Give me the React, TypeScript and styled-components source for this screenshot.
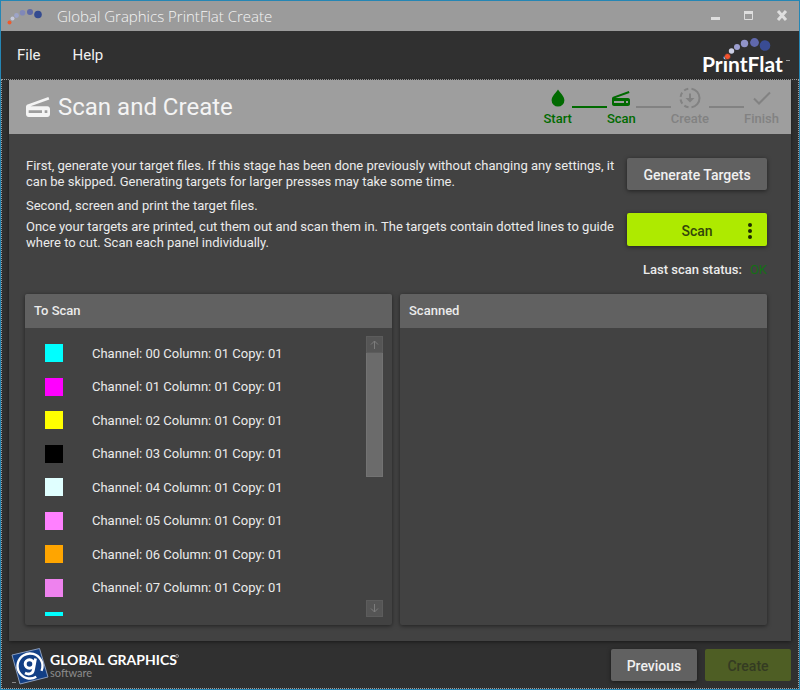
import React, { useRef } from 'react';
import styled, { createGlobalStyle, css } from 'styled-components';

const GlobalStyle = createGlobalStyle`
  * { box-sizing: border-box; }
  body { margin: 0; background: #303030; font-family: Roboto, sans-serif; }
  button { font-family: inherit; border: 0; padding: 0; cursor: pointer; }
  p, h1, h2, ul, ol { margin: 0; padding: 0; }
  ul, ol { list-style: none; }
`;

const Window = styled.div`
  min-height: 100vh;
  display: flex;
  flex-direction: column;
  border: 1px solid #2586b4;
  background: #303030;
  color: #ebebeb;
`;

const TitleBar = styled.header`
  height: 30px;
  display: flex;
  align-items: center;
  background: #9b9b9b;
  padding: 0 9px 0 6px;
`;

const TitleText = styled.span`
  flex: 1;
  margin-left: 12px;
  font: 300 15px/20px 'Open Sans', sans-serif;
  color: #f4f4f4;
`;

const WindowButtons = styled.div`
  display: flex;
  gap: 17px;
`;

const WindowButton = styled.button`
  width: 16px;
  height: 16px;
  background: none;
  color: #dedede;
  svg { display: block; }
`;

const MenuBar = styled.nav`
  height: 48px;
  display: flex;
  align-items: center;
  justify-content: space-between;
  padding: 0 8px 0 16px;
`;

const MenuItems = styled.div`
  display: flex;
  gap: 32px;
`;

const MenuItem = styled.button`
  background: none;
  color: #f0f0f0;
  font-size: 15px;
  line-height: 20px;
`;

const Workspace = styled.main`
  flex: 1;
  display: flex;
  flex-direction: column;
  border: 1px dotted #a0a0a0;
  padding: 0 7px;
`;

const Card = styled.section`
  flex: 1;
  display: flex;
  flex-direction: column;
  background: #424242;
  box-shadow: 0 1px 4px rgba(0, 0, 0, 0.5);
`;

const CardHeader = styled.div`
  height: 54px;
  display: flex;
  align-items: center;
  justify-content: space-between;
  padding: 0 12px 0 17px;
  background: #9e9e9e;
`;

const Heading = styled.div`
  display: flex;
  align-items: center;
  gap: 8px;
  color: #f4f4f4;
`;

const HeadingText = styled.h1`
  font-size: 24px;
  line-height: 28px;
  font-weight: 400;
`;

const Steps = styled.ol`
  display: flex;
  align-items: flex-start;
`;

const Step = styled.li<{ $done?: boolean }>`
  display: grid;
  grid-template-rows: 22px 16px;
  row-gap: 2px;
  place-items: center;
  color: ${p => (p.$done ? '#006a00' : '#828282')};
  font-size: 13px;
  line-height: 16px;
  font-weight: 500;
  svg { display: block; }
`;

const StepLine = styled.li<{ $done?: boolean }>`
  width: 35px;
  height: 2px;
  margin-top: 19px;
  background: ${p => (p.$done ? '#006a00' : '#828282')};
`;

const CardBody = styled.div`
  flex: 1;
  display: flex;
  flex-direction: column;
  gap: 16px;
  padding: 24px 24px 16px 16px;
`;

const Intro = styled.div`
  display: flex;
  justify-content: space-between;
  gap: 10px;
  padding-left: 1px;
`;

const Instructions = styled.div`
  flex: 1;
  font-size: 13px;
  line-height: 16px;
`;

const Paragraph = styled.p`
  & + & { margin-top: 8px; }
  & + & + & { margin-top: 5px; }
`;

const Actions = styled.div`
  width: 140px;
  display: flex;
  flex-direction: column;
  gap: 23px;
`;

const Button = styled.button<{ $tone?: 'accent' | 'muted' }>`
  height: 32px;
  min-width: 86px;
  padding-top: 2px;
  border-radius: 2px;
  font-size: 14px;
  font-weight: 500;
  background: #616161;
  color: #f0f0f0;
  box-shadow: 0 1px 4px rgba(0, 0, 0, 0.5);
  ${p => p.$tone === 'accent' && css`
    height: 33px;
    display: grid;
    grid-template-columns: 1fr auto 1fr;
    align-items: center;
    padding-right: 12px;
    padding-left: 12px;
    background: #aeea00;
    color: #34460a;
    svg { justify-self: end; grid-column: 3; }
    span { grid-column: 2; }
  `}
  ${p => p.$tone === 'muted' && css`
    background: #4e5e24;
    color: #343b22;
    box-shadow: none;
  `}
`;

const Status = styled.p`
  display: flex;
  justify-content: flex-end;
  gap: 8px;
  margin-top: -7px;
  font-size: 13px;
  line-height: 16px;
  font-weight: 500;
  white-space: nowrap;
`;

const StatusValue = styled.span`
  color: #147014;
  font-weight: 400;
`;

const Panels = styled.div`
  flex: 1;
  display: grid;
  grid-template-columns: 1fr 1fr;
  gap: 8px;
`;

const Panel = styled.section`
  display: flex;
  flex-direction: column;
  border-radius: 2px;
  background: #424242;
  box-shadow: 0 1px 4px rgba(0, 0, 0, 0.5);
  overflow: hidden;
`;

const PanelTitle = styled.h2`
  padding: 0 9px;
  background: #616161;
  font-size: 13px;
  line-height: 34px;
  font-weight: 500;
`;

const Scroller = styled.div`
  flex: 1;
  display: flex;
  margin: 8px 9px 8px 20px;
`;

const ChannelList = styled.ul`
  flex: 1;
  height: 280px;
  overflow: hidden;
`;

const Channel = styled.li`
  height: 34px;
  display: flex;
  align-items: center;
  gap: 29px;
  font-size: 13px;
  &:nth-child(even) { height: 33px; }
`;

const Swatch = styled.span<{ $color: string }>`
  width: 18px;
  height: 18px;
  background: ${p => p.$color};
`;

const ScrollBar = styled.div`
  width: 17px;
  display: flex;
  flex-direction: column;
`;

const ScrollButton = styled.button`
  height: 17px;
  background: #555;
  border: 1px solid #5c5c5c;
  color: #7c7c7c;
  display: grid;
  place-items: center;
`;

const ScrollTrack = styled.div`
  flex: 1;
`;

const ScrollThumb = styled.div`
  height: 50%;
  background: #6b6b6b;
  border: 1px solid #737373;
  border-top: 0;
`;

const Footer = styled.footer`
  height: 47px;
  display: flex;
  align-items: center;
  justify-content: space-between;
`;

const FooterButtons = styled.div`
  display: flex;
  gap: 8px;
`;

const ScannerIcon = ({ size }: { size: number }) => (
  <svg width={size} height={Math.round((size * 15) / 18)} viewBox="3 5 18 15" fill="currentColor" aria-hidden="true">
    <g transform="translate(24 0) scale(-1 1)">
      <path d="M19.8 10.7 4.200 5l-.7 1.900L17.600 12H5c-1.100 0-2 .9-2 2v4c0 1.100.9 2 2 2h14c1.100 0 2-.9 2-2v-5.500c0-.8-.5-1.600-1.200-1.800zM7 17H5v-2h2v2zm12 0H9v-2h10v2z" />
    </g>
  </svg>
);

const DropIcon = () => (
  <svg width="20" height="20" viewBox="0 0 20 20" fill="currentColor" aria-hidden="true">
    <path d="M10 1.500C8 4.700 3.600 8.300 3.600 12.200a6.400 6.400 0 0 0 12.800 0C16.400 8.300 12 4.700 10 1.500Z" />
  </svg>
);

const ProgressIcon = () => (
  <svg width="22" height="22" viewBox="0 0 22 22" fill="none" stroke="currentColor" strokeWidth="2" aria-hidden="true">
    <path d="M12.500 1.700a9.400 9.400 0 0 1 0 18.600" />
    <path d="M9.500 20.300A9.400 9.400 0 0 1 9.500 1.700" strokeDasharray="4.500 2.800" />
    <path d="M11 6.500V12" />
    <path d="m6.500 11 4.500 4.500 4.500-4.500Z" fill="currentColor" stroke="none" />
  </svg>
);

const CheckIcon = () => (
  <svg width="20" height="20" viewBox="0 0 20 20" fill="none" stroke="currentColor" strokeWidth="2" aria-hidden="true">
    <path d="m2 10.500 5 5L18 4.500" />
  </svg>
);

const MoreIcon = () => (
  <svg width="10" height="18" viewBox="0 0 10 18" fill="#1d2a00" aria-hidden="true">
    <circle cx="5" cy="3" r="2" />
    <circle cx="5" cy="9" r="2" />
    <circle cx="5" cy="15" r="2" />
  </svg>
);

const ArrowIcon = ({ down }: { down?: boolean }) => (
  <svg width="9" height="9" viewBox="0 0 9 9" fill="none" stroke="currentColor" aria-hidden="true">
    <path d={down ? 'M4.500 0V8M1 4.500 4.500 8 8 4.500' : 'M4.500 9V1M1 4.500 4.500 1 8 4.500'} />
  </svg>
);

const AppIcon = () => (
  <svg width="38" height="18" viewBox="0 0 38 18" aria-hidden="true">
    <circle cx="2.500" cy="15.500" r="2" fill="#ee5a2c" />
    <circle cx="5.500" cy="11.500" r="2" fill="#c5c9dc" />
    <circle cx="9.500" cy="8.500" r="2.400" fill="#9da4c8" />
    <circle cx="15.500" cy="5.800" r="2.800" fill="#8088b8" />
    <circle cx="23" cy="5" r="3" fill="#5d69a6" />
    <circle cx="31" cy="7.500" r="3.800" fill="#344b90" />
  </svg>
);

const PrintFlatLogo = () => (
  <svg width="88" height="40" viewBox="0 0 88 40" role="img" aria-label="PrintFlat">
    <text x="-1" y="37" fill="#fff" fontFamily="Lato, sans-serif" fontSize="21" fontWeight="700">PrintFlat</text>
    <circle cx="24.500" cy="21.500" r="3" fill="#f4522e" stroke="#303030" strokeWidth=".6" />
    <circle cx="28.500" cy="16" r="2.700" fill="#cdd0e5" />
    <circle cx="34" cy="12" r="3" fill="#9d9fd0" />
    <circle cx="41.500" cy="8.500" r="3.700" fill="#9093c8" />
    <circle cx="51.500" cy="7.500" r="4.400" fill="#6068ac" />
    <circle cx="62" cy="10.500" r="5.300" fill="#394c94" />
    <path d="M83 25.500h4" stroke="#999" />
  </svg>
);

const CompanyLogo = () => (
  <svg width="172" height="40" viewBox="0 0 172 40" role="img" aria-label="Global Graphics software">
    <path d="M3 10 30.500 3.500 39 32 11 39Z" fill="#123f85" stroke="#8a9dbd" />
    <circle cx="21" cy="21" r="12.500" fill="none" stroke="#fff" strokeWidth="2.400" strokeDasharray="70 8.500" transform="rotate(60 21 21)" />
    <circle cx="20.500" cy="19" r="4.300" fill="none" stroke="#fff" strokeWidth="3" />
    <path d="M26.500 13.500 24.500 24.500c-.6 4.500-4.500 5.500-8.500 3.500" fill="none" stroke="#fff" strokeWidth="2.800" />
    <path d="M3 37.500h4" stroke="#888" />
    <text x="41" y="20" fill="#fff" fontFamily="Lato, sans-serif" fontSize="14" fontWeight="700">GLOBAL GRAPHICS</text>
    <text x="41" y="32" fill="#8c8c8c" fontFamily="Lato, sans-serif" fontSize="11">software</text>
    <circle cx="168" cy="11" r="1.500" fill="none" stroke="#999" />
  </svg>
);

const channels = ['#00ffff', '#ff00ff', '#ffff00', '#000000', '#e0ffff', '#ff80ff', '#ffa500', '#ee82ee', '#00ffff'];

export default function App() {
  const list = useRef<HTMLUListElement>(null);
  const scroll = (top: number) => list.current?.scrollBy({ top });

  return (
    <Window>
      <GlobalStyle />
      <TitleBar>
        <AppIcon />
        <TitleText>Global Graphics PrintFlat Create</TitleText>
        <WindowButtons>
          <WindowButton aria-label="Minimize">
            <svg width="16" height="16" fill="none" stroke="currentColor" strokeWidth="3"><path d="M3 10.500h9" /></svg>
          </WindowButton>
          <WindowButton aria-label="Maximize">
            <svg width="16" height="16" fill="none" stroke="currentColor"><path d="M3.500 4.500h8v7h-8z" /><path d="M3 4.500h9" strokeWidth="3" /></svg>
          </WindowButton>
          <WindowButton aria-label="Close">
            <svg width="16" height="16" fill="none" stroke="currentColor" strokeWidth="3"><path d="m4 3 8 9m0-9-8 9" /></svg>
          </WindowButton>
        </WindowButtons>
      </TitleBar>
      <MenuBar>
        <MenuItems>
          <MenuItem>File</MenuItem>
          <MenuItem>Help</MenuItem>
        </MenuItems>
        <PrintFlatLogo />
      </MenuBar>
      <Workspace>
        <Card>
          <CardHeader>
            <Heading>
              <ScannerIcon size={24} />
              <HeadingText>Scan and Create</HeadingText>
            </Heading>
            <Steps>
              <Step $done><DropIcon />Start</Step>
              <StepLine $done />
              <Step $done><ScannerIcon size={18} />Scan</Step>
              <StepLine />
              <Step><ProgressIcon />Create</Step>
              <StepLine />
              <Step><CheckIcon />Finish</Step>
            </Steps>
          </CardHeader>
          <CardBody>
            <Intro>
              <Instructions>
                <Paragraph>First, generate your target files. If this stage has been done previously without changing any settings, it can be skipped. Generating targets for larger presses may take some time.</Paragraph>
                <Paragraph>Second, screen and print the target files.</Paragraph>
                <Paragraph>Once your targets are printed, cut them out and scan them in. The targets contain dotted lines to guide where to cut. Scan each panel individually.</Paragraph>
              </Instructions>
              <Actions>
                <Button>Generate Targets</Button>
                <Button $tone="accent"><span>Scan</span><MoreIcon /></Button>
                <Status>Last scan status: <StatusValue>OK</StatusValue></Status>
              </Actions>
            </Intro>
            <Panels>
              <Panel>
                <PanelTitle>To Scan</PanelTitle>
                <Scroller>
                  <ChannelList ref={list}>
                    {channels.map((color, i) => (
                      <Channel key={i}>
                        <Swatch $color={color} />
                        Channel: {String(i).padStart(2, '0')} Column: 01 Copy: 01
                      </Channel>
                    ))}
                  </ChannelList>
                  <ScrollBar>
                    <ScrollButton aria-label="Scroll up" onClick={() => scroll(-34)}><ArrowIcon /></ScrollButton>
                    <ScrollTrack><ScrollThumb /></ScrollTrack>
                    <ScrollButton aria-label="Scroll down" onClick={() => scroll(34)}><ArrowIcon down /></ScrollButton>
                  </ScrollBar>
                </Scroller>
              </Panel>
              <Panel>
                <PanelTitle>Scanned</PanelTitle>
              </Panel>
            </Panels>
          </CardBody>
        </Card>
        <Footer>
          <CompanyLogo />
          <FooterButtons>
            <Button>Previous</Button>
            <Button $tone="muted" disabled>Create</Button>
          </FooterButtons>
        </Footer>
      </Workspace>
    </Window>
  );
}
